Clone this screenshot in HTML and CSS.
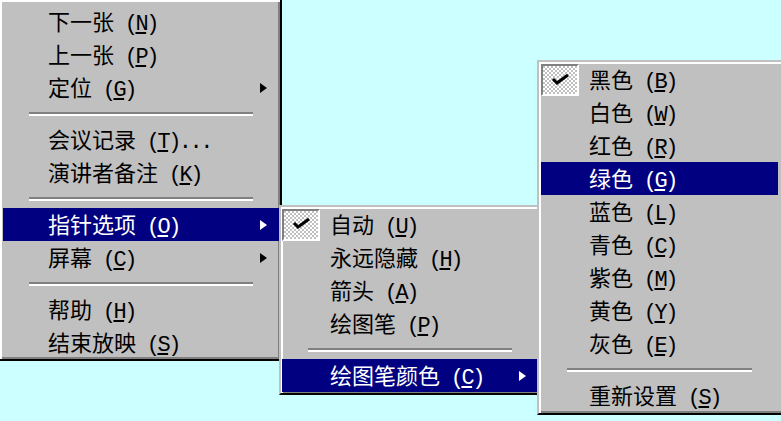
FILE: index.html
```html
<!DOCTYPE html>
<html lang="zh-CN">
<head>
    <meta charset="UTF-8">
    <title>幻灯片放映菜单</title>
    <link rel="stylesheet" href="styles.css">
</head>
<body>
    <div class="desktop">
        <!-- Main popup menu -->
        <div class="menu menu-main">
            <div class="item"><span class="label">下一张<span class="key"> (<u>N</u>)</span></span></div>
            <div class="item"><span class="label">上一张<span class="key"> (<u>P</u>)</span></span></div>
            <div class="item"><span class="label">定位<span class="key"> (<u>G</u>)</span></span><span class="arrow"></span></div>
            <div class="sep"></div>
            <div class="item"><span class="label">会议记录<span class="key"> (<u>T</u>)...</span></span></div>
            <div class="item"><span class="label">演讲者备注<span class="key"> (<u>K</u>)</span></span></div>
            <div class="sep"></div>
            <div class="item active"><span class="label">指针选项<span class="key"> (<u>O</u>)</span></span><span class="arrow"></span></div>
            <div class="item"><span class="label">屏幕<span class="key"> (<u>C</u>)</span></span><span class="arrow"></span></div>
            <div class="sep"></div>
            <div class="item"><span class="label">帮助<span class="key"> (<u>H</u>)</span></span></div>
            <div class="item"><span class="label">结束放映<span class="key"> (<u>S</u>)</span></span></div>
        </div>

        <!-- Pointer options submenu -->
        <div class="menu menu-pointer">
            <div class="item"><span class="mark on"><svg width="34" height="28" viewBox="0 0 34 28"><polyline points="10,12 14,16 25,8" fill="none" stroke="#000" stroke-width="3"/></svg></span><span class="label">自动<span class="key"> (<u>U</u>)</span></span></div>
            <div class="item"><span class="mark"></span><span class="label">永远隐藏<span class="key"> (<u>H</u>)</span></span></div>
            <div class="item"><span class="mark"></span><span class="label">箭头<span class="key"> (<u>A</u>)</span></span></div>
            <div class="item"><span class="mark"></span><span class="label">绘图笔<span class="key"> (<u>P</u>)</span></span></div>
            <div class="sep"></div>
            <div class="item active"><span class="mark"></span><span class="label">绘图笔颜色<span class="key"> (<u>C</u>)</span></span><span class="arrow"></span></div>
        </div>

        <!-- Pen colour submenu -->
        <div class="menu menu-color">
            <div class="item"><span class="mark on"><svg width="33" height="29" viewBox="0 0 33 29"><polyline points="10,13 14,17 25,9" fill="none" stroke="#000" stroke-width="3"/></svg></span><span class="label">黑色<span class="key"> (<u>B</u>)</span></span></div>
            <div class="item"><span class="mark"></span><span class="label">白色<span class="key"> (<u>W</u>)</span></span></div>
            <div class="item"><span class="mark"></span><span class="label">红色<span class="key"> (<u>R</u>)</span></span></div>
            <div class="item active"><span class="mark"></span><span class="label">绿色<span class="key"> (<u>G</u>)</span></span></div>
            <div class="item"><span class="mark"></span><span class="label">蓝色<span class="key"> (<u>L</u>)</span></span></div>
            <div class="item"><span class="mark"></span><span class="label">青色<span class="key"> (<u>C</u>)</span></span></div>
            <div class="item"><span class="mark"></span><span class="label">紫色<span class="key"> (<u>M</u>)</span></span></div>
            <div class="item"><span class="mark"></span><span class="label">黄色<span class="key"> (<u>Y</u>)</span></span></div>
            <div class="item"><span class="mark"></span><span class="label">灰色<span class="key"> (<u>E</u>)</span></span></div>
            <div class="sep"></div>
            <div class="item"><span class="mark"></span><span class="label">重新设置<span class="key"> (<u>S</u>)</span></span></div>
        </div>
    </div>
</body>
</html>
```

FILE: styles.css
```css
body { margin: 0; background-color: #ccffff; overflow: hidden; }
.desktop { position: relative; width: 781px; height: 421px; overflow: hidden; font-family: "Noto Sans CJK SC", sans-serif; font-size: 22px; color: #000; }

/* win95 style popup menus */
.menu { position: absolute; box-sizing: border-box; background-color: #c0c0c0; border: 2px solid; border-color: #c0c0c0 #000 #000 #c0c0c0; box-shadow: inset 2px 2px #fff, inset -2px -2px #808080; }
.menu-main { left: -2px; top: -2px; width: 284px; padding: 5px 1px 0 3px; }
.menu-pointer { left: 279px; top: 205px; width: 262px; padding: 1px; }
.menu-color { left: 537px; top: 60px; width: 250px; padding: 1px 7px 1px 2px; }

.item { display: flex; align-items: center; height: 33px; padding-right: 12px; white-space: nowrap; }
.menu-main .item { padding-left: 45px; }
.item.active { background-color: #000080; color: #fff; }
.label { line-height: 29px; padding-top: 1px; }
.key { font-family: "Liberation Mono", monospace; font-size: 22px; letter-spacing: -2.5px; }
.key u { text-decoration-thickness: 2px; text-underline-offset: 2px; }

.arrow { margin-left: auto; width: 0; height: 0; border-left: 7px solid #000; border-top: 5px solid transparent; border-bottom: 5px solid transparent; }
.item.active .arrow { border-left-color: #fff; }

.mark { flex: none; box-sizing: border-box; width: 38px; height: 32px; margin-right: 10px; }
.mark.on { border: 2px solid; border-color: #808080 #fff #fff #808080; background-color: #c0c0c0; background-image: repeating-conic-gradient(#fff 0 25%, #c0c0c0 0 50%); background-size: 4px 4px; }
.mark svg { display: block; }

.sep { height: 19px; display: flex; align-items: center; padding: 0 26px; }
.sep::before { content: ""; flex: 1; border-top: 2px solid #808080; border-bottom: 2px solid #fff; }
```
